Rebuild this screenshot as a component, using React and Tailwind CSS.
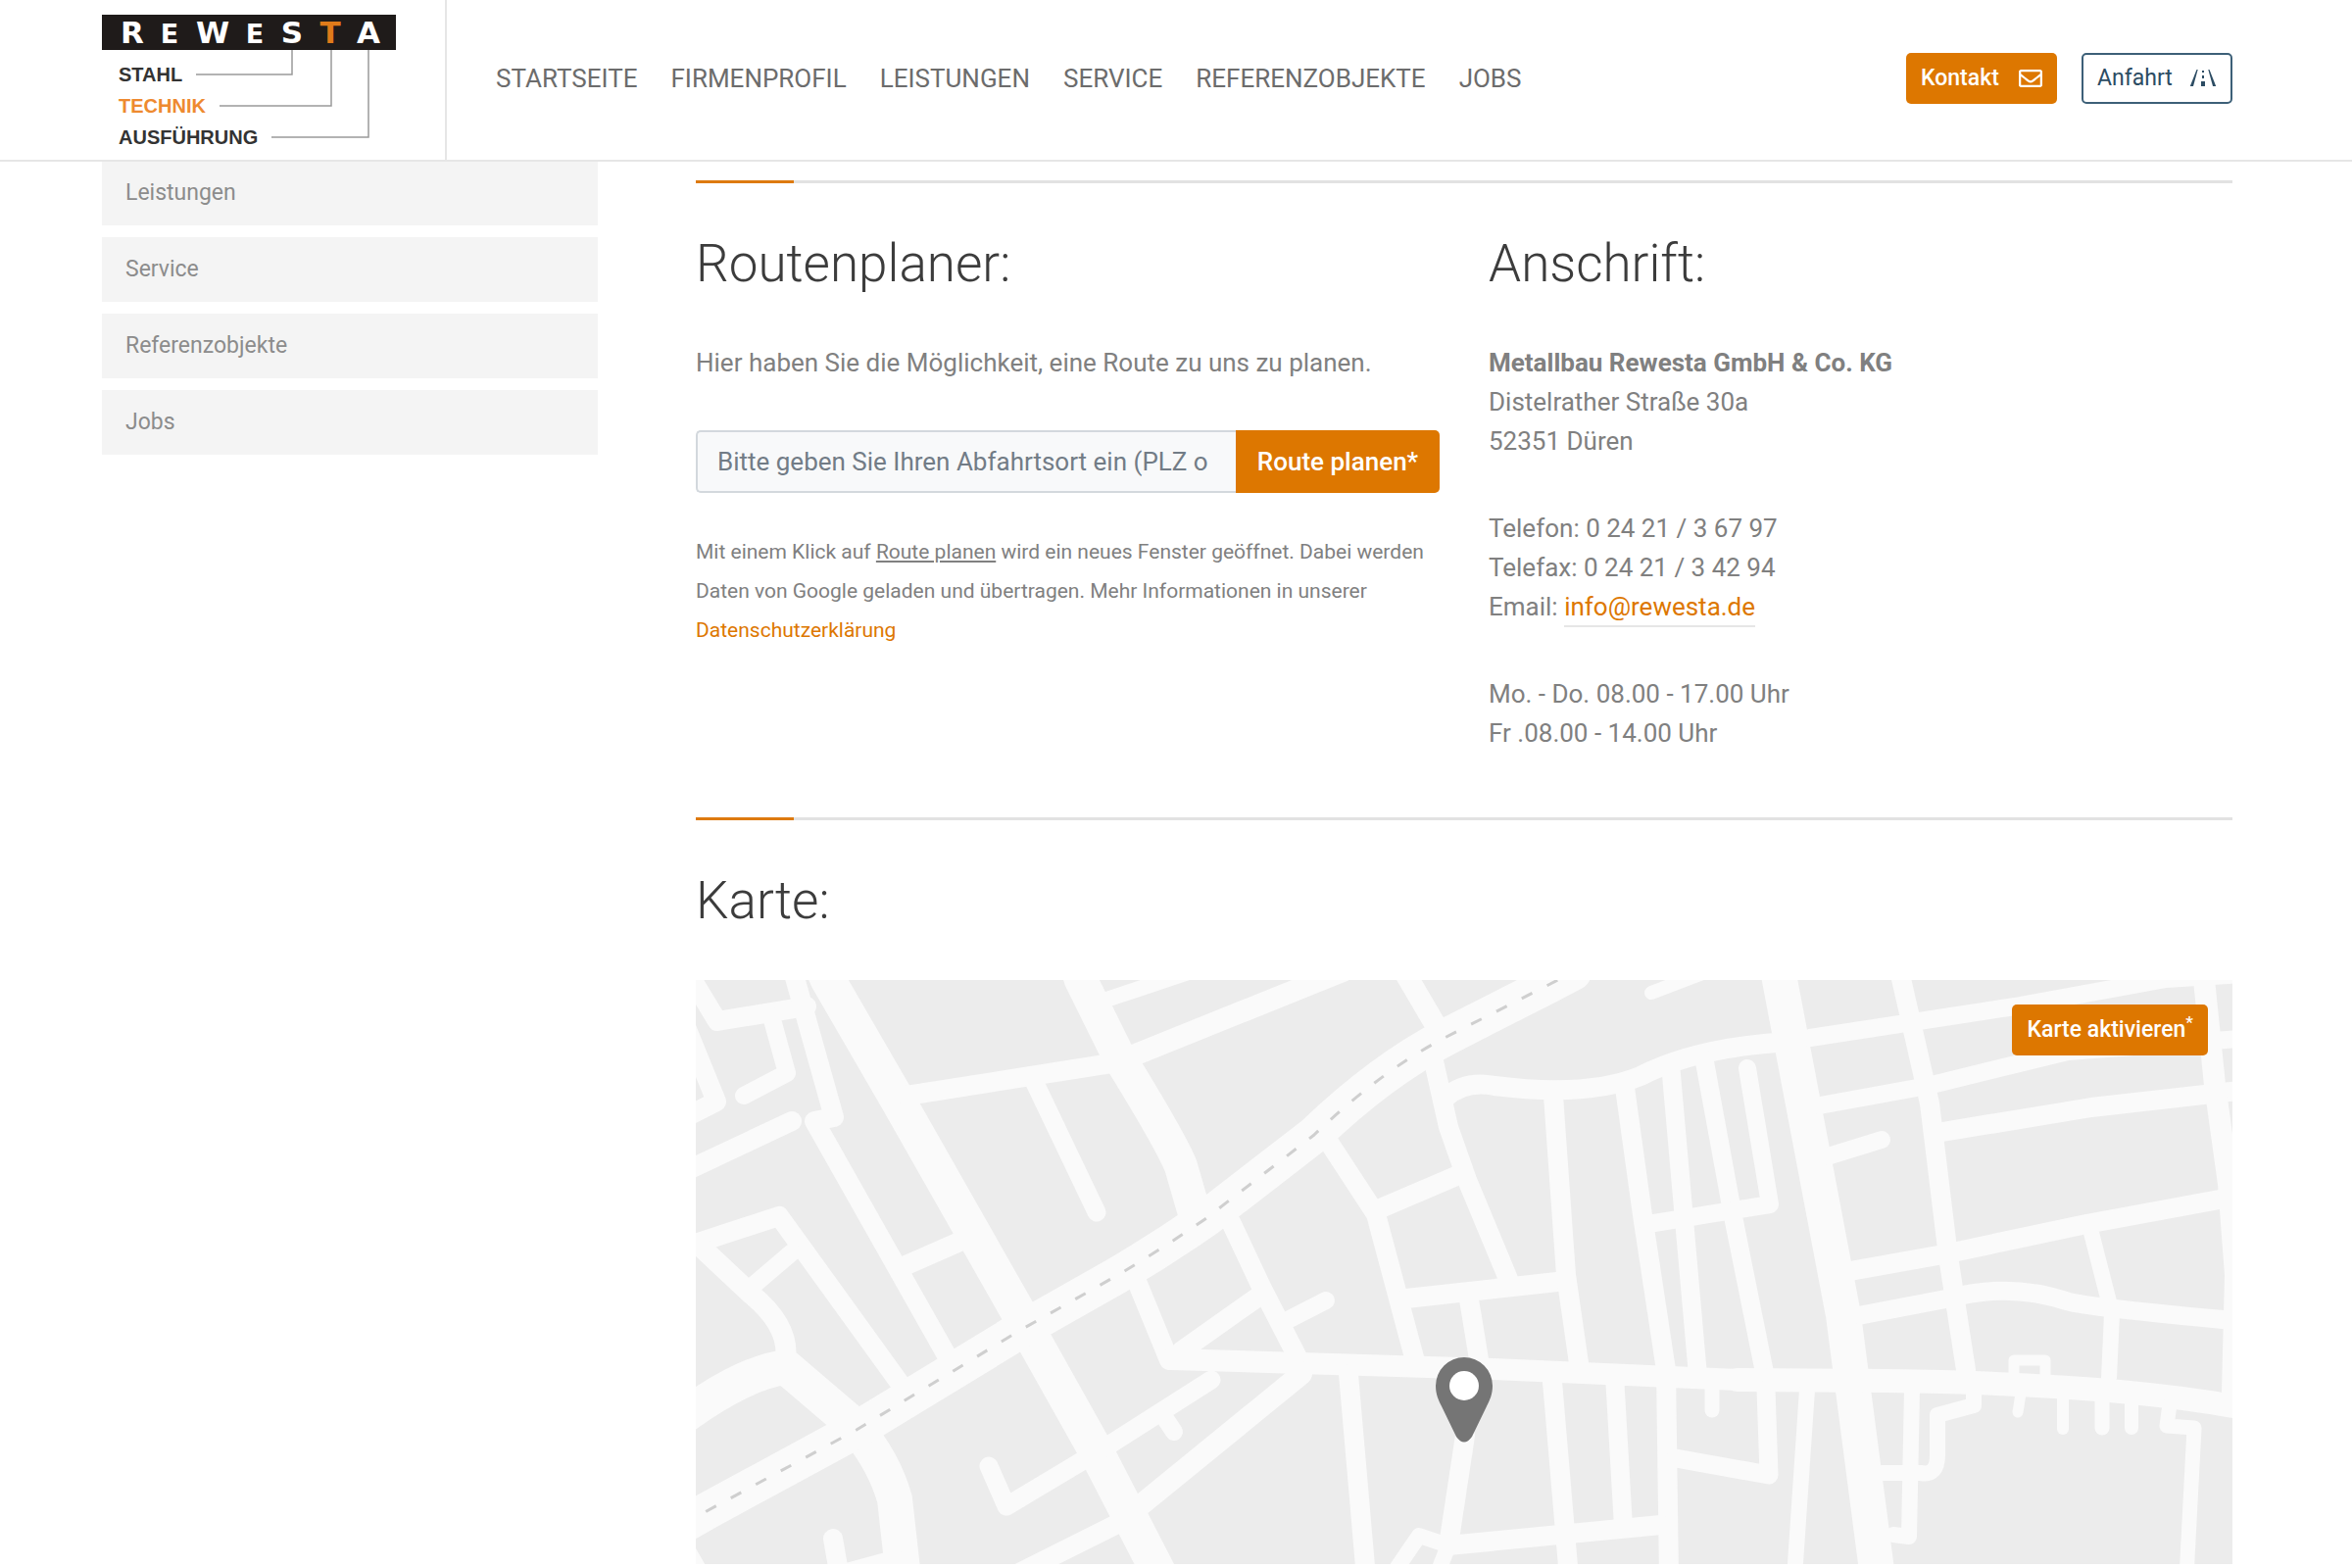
import { FaRegEnvelope } from "react-icons/fa"

const navItems = ["Startseite", "Firmenprofil", "Leistungen", "Service", "Referenzobjekte", "Jobs"]
const sideItems = ["Leistungen", "Service", "Referenzobjekte", "Jobs"]

const logoLetters = [
  { char: "R", x: 31, size: 31, fill: "#fff" },
  { char: "E", x: 69, size: 27, fill: "#fff" },
  { char: "W", x: 113, size: 31, fill: "#fff" },
  { char: "E", x: 156, size: 27, fill: "#fff" },
  { char: "S", x: 194, size: 31, fill: "#fff" },
  { char: "T", x: 233, size: 31, fill: "#e07b1a" },
  { char: "A", x: 272, size: 31, fill: "#fff" },
]

// [stroke width, path]
const roads = [
  [20, "M-7 -6L22 42L113 27"],
  [18, "M77 37L93 95L49 118"],
  [20, "M100 -6L141 140L121 144L256 383"],
  [20, "M-10 48L21 124L-10 140"],
  [20, "M-6 193L98 144"],
  [36, "M126 -20L135 0L208 126L325 332L408 480L475 610"],
  [34, "M388 -15L393 0L432 79Q485 165 495 190L508 235"],
  [16, "M419 20L500 -7"],
  [22, "M449 76L660 -9"],
  [20, "M215 118L424 85"],
  [19, "M345 103L409 237"],
  [20, "M-4 270L85 241L210 414"],
  [18, "M98 278L57 313"],
  [21, "M8 275L57 321Q92 350 92 380"],
  [36, "M-15 447Q50 400 92 395L160 453Q192 490 203 530L212 610"],
  [20, "M140 570L147 610"],
  [12, "M150 602L205 587"],
  [20, "M210 293L276 264"],
  [20, "M449 305L483 388"],
  [22, "M485 387L812 397L1063 408"],
  [20, "M495 379L577 321"],
  [20, "M546 247L577 313L613 383"],
  [18, "M602 348L643 327"],
  [19, "M526 408L424 473L317 537L299 496"],
  [18, "M480 449L488 461"],
  [22, "M618 402L455 535"],
  [20, "M666 402L684 610"],
  [20, "M434 553L330 605"],
  [20, "M643 161L694 239L733 385"],
  [20, "M694 235L783 197"],
  [22, "M722 -10L756 48"],
  [20, "M753 83L768 150L787 204L829 305"],
  [20, "M725 325L888 307"],
  [20, "M789 326L799 387"],
  [20, "M765 120Q785 102 815 108Q910 120 964 98Q1022 68 1118 63"],
  [20, "M875 118L888 301L901 391"],
  [20, "M948 110L966 240L990 398L993 610"],
  [19, "M995 91L1008 239L1022 398"],
  [19, "M1029 81L1058 239L1090 398"],
  [18, "M1073 90L1096 229L972 249"],
  [36, "M1103 -20L1106 0L1171 342L1206 610"],
  [14, "M975 13L1030 -8"],
  [18, "M1137 59L1346 27L1500 -1L1580 -6"],
  [18, "M1147 128L1257 108L1400 73L1575 60"],
  [20, "M1272 155L1424 130L1575 113"],
  [18, "M1155 180L1210 163"],
  [20, "M1228 -10L1259 126L1278 282L1296 398"],
  [20, "M1178 297L1273 280L1419 249L1560 223"],
  [19, "M1189 342L1278 325Q1340 308 1400 328Q1420 334 1575 348"],
  [16, "M1424 258L1445 340L1442 406"],
  [22, "M1538 -10L1550 107L1564 208L1571 301L1568 420"],
  [24, "M1063 408L1215 409Q1450 412 1580 437"],
  [20, "M874 410L891 610"],
  [19, "M938 412L946 550"],
  [20, "M768 577L985 556"],
  [15, "M1037 414L1037 439"],
  [19, "M1092 418L1095 505L1000 488"],
  [16, "M1134 418L1121 610"],
  [16, "M1241 418L1238 568L1222 566"],
  [16, "M1304 422L1304 434L1267 444L1267 485Q1267 506 1250 503L1210 503"],
  [11, "M1345 405L1345 388L1377 388L1377 405"],
  [11, "M1352 422L1349 441"],
  [12, "M1395 422L1395 458"],
  [15, "M1435 425L1435 457"],
  [14, "M1465 428L1465 457"],
  [15, "M1504 433L1501 455L1529 457L1521 610"],
  [20, "M785 465L768 577"],
  [16, "M712 605L738 567L768 577L755 610"],
  [16, "M-12 575L8 610"],
]

const railway = "M-20 560L11 542L164 459L330 358L429 302Q475 275 521 243L631 158Q700 92 766 58L870 5L895 -8"

function Logo() {
  return (
    <svg viewBox="0 0 300 140" className="w-[300px] h-[140px]" role="img" aria-label="Rewesta">
      <rect width="300" height="36" fill="#1f1b1a" />
      {logoLetters.map((l) => (
        <text key={l.x} x={l.x} y="29" fontSize={l.size} fill={l.fill} textAnchor="middle"
          fontWeight="700" fontFamily="DejaVu Sans, sans-serif">{l.char}</text>
      ))}
      <g fill="none" stroke="#9a9a9a" strokeWidth="1.5">
        <path d="M96 61H194V36" />
        <path d="M120 93H234V36" />
        <path d="M173 125H272V36" />
      </g>
      <g fontSize="20" fontWeight="700" fontFamily="Liberation Sans, sans-serif" fill="#333">
        <text x="17" y="68">STAHL</text>
        <text x="17" y="100" fill="#ee8a30">TECHNIK</text>
        <text x="17" y="132">AUSFÜHRUNG</text>
      </g>
    </svg>
  )
}

function RoadIcon() {
  return (
    <svg viewBox="0 0 28 20" className="w-7 h-5" fill="currentColor" aria-hidden="true">
      <path d="M7.500 1h1.200L4 18H.8z" />
      <path d="M20.500 1h-1.200L24 18h3.200z" />
      <rect x="13" y="2" width="2" height="2" />
      <rect x="13" y="7" width="2" height="3" />
      <rect x="12" y="13" width="4" height="5" />
    </svg>
  )
}

function Divider() {
  return (
    <div className="h-[3px] bg-[#e2e2e2]">
      <div className="h-full w-[100px] bg-[#dd7a10]"></div>
    </div>
  )
}

function Heading({ children }) {
  return <h2 className="mt-[50px] mb-[49px] text-[53px] leading-[64px] font-light text-[#3c3c3c]">{children}</h2>
}

function MapDrawing() {
  return (
    <svg viewBox="0 0 1568 596" className="block w-full h-auto" role="img" aria-label="Karte">
      <rect width="1568" height="596" fill="#ececec" />
      <g fill="none" stroke="#fafafa" strokeLinecap="round" strokeLinejoin="round">
        {roads.map(([width, d]) => <path key={d} d={d} strokeWidth={width} />)}
        <path d={railway} strokeWidth="38" />
      </g>
      <path d={railway} fill="none" stroke="#cfcfcf" strokeWidth="3" strokeDasharray="12 17" strokeDashoffset="-6" />
      <path d="M784 385a29 29 0 0 1 29 29c0 9-3 15-6 21l-15 31q-8 11-16 0l-15-31c-3-6-6-12-6-21a29 29 0 0 1 29-29z" fill="#757575" />
      <circle cx="784" cy="414" r="15" fill="#fff" />
    </svg>
  )
}

function App() {
  return (
    <div className="min-h-screen bg-white font-[Roboto,sans-serif] text-[26px] leading-[40px] text-[#808080]">
      <header className="sticky top-0 z-10 flex items-stretch h-[165px] pl-[104px] pr-[122px] bg-white border-b-2 border-[#e6e6e6]">
        <a href="#start" className="pt-[15px] pr-[50px] border-r-2 border-[#e6e6e6]">
          <Logo />
        </a>
        <nav className="flex flex-1 items-center gap-[34px] pl-[50px] pb-1 uppercase text-[#6c6c6c]">
          {navItems.map((item) => <a key={item} href={`#${item}`}>{item}</a>)}
        </nav>
        <div className="flex items-center gap-[25px] pb-1 text-[23px]">
          <button className="flex items-center justify-between w-[154px] h-[52px] px-[15px] rounded-[5px] bg-[#dd7700] text-white font-medium">
            Kontakt <FaRegEnvelope className="size-6" />
          </button>
          <button className="flex items-center justify-between w-[154px] h-[52px] px-[14px] rounded-[5px] border-2 border-[#3d6078] text-[#2c4c63]">
            Anfahrt <RoadIcon />
          </button>
        </div>
      </header>

      <main className="-mt-px grid grid-cols-4 gap-[50px] pl-[104px] pr-[122px]">
        <aside>
          <ul className="flex flex-col gap-3 text-[23px] text-[#8c8c8c]">
            {sideItems.map((item) => (
              <li key={item}>
                <a href={`#${item}`} className="flex items-center h-[66px] px-6 bg-[#f4f4f4]">{item}</a>
              </li>
            ))}
          </ul>
        </aside>

        <div className="col-span-3 pt-5 pl-[50px]">
          <Divider />
          <section className="grid grid-cols-2 gap-[50px] mb-[66px]">
            <div>
              <Heading>Routenplaner:</Heading>
              <p className="mb-[49px]">Hier haben Sie die Möglichkeit, eine Route zu uns zu planen.</p>
              <form className="flex h-16 mb-10">
                <input
                  type="text"
                  aria-label="Abfahrtsort"
                  placeholder="Bitte geben Sie Ihren Abfahrtsort ein (PLZ oder Straße)"
                  className="flex-1 min-w-0 pl-5 pr-7 rounded-l-[5px] border-2 border-r-0 border-[#d3d8dd] bg-[#f8f9fa] placeholder:text-[#727c86]"
                />
                <button type="button" className="w-[208px] rounded-r-[5px] bg-[#dd7700] text-white font-medium">
                  Route planen*
                </button>
              </form>
              <p className="text-[21px]">
                Mit einem Klick auf <u>Route planen</u> wird ein neues Fenster geöffnet. Dabei werden
                Daten von Google geladen und übertragen. Mehr Informationen in unserer{" "}
                <a href="#datenschutz" className="text-[#dd7700]">Datenschutzerklärung</a>
              </p>
            </div>

            <div>
              <Heading>Anschrift:</Heading>
              <address className="flex flex-col gap-[49px] not-italic">
                <p>
                  <strong className="font-bold">Metallbau Rewesta GmbH &amp; Co. KG</strong><br />
                  Distelrather Straße 30a<br />
                  52351 Düren
                </p>
                <p>
                  Telefon: 0 24 21 / 3 67 97<br />
                  Telefax: 0 24 21 / 3 42 94<br />
                  Email: <a href="mailto:info@rewesta.de" className="pb-1 border-b-2 border-[#e6e6e6] text-[#dd7700]">info@rewesta.de</a>
                </p>
                <p>
                  Mo. - Do. 08.00 - 17.00 Uhr<br />
                  Fr .08.00 - 14.00 Uhr
                </p>
              </address>
            </div>
          </section>

          <Divider />
          <section>
            <Heading>Karte:</Heading>
            <div className="relative">
              <MapDrawing />
              <button className="absolute top-[25px] right-[25px] h-[52px] px-[15px] rounded-[5px] bg-[#dd7700] text-[23px] text-white font-medium">
                Karte aktivieren<sup>*</sup>
              </button>
            </div>
          </section>
        </div>
      </main>
    </div>
  )
}

export default App
